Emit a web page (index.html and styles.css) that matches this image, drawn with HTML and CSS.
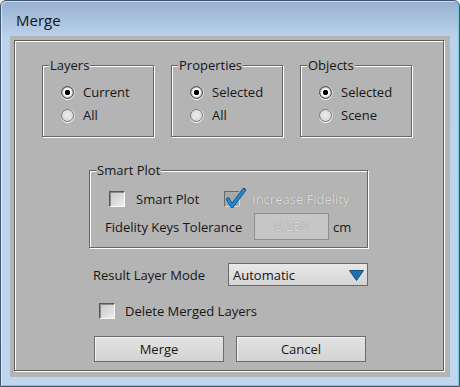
FILE: index.html
```html
<!DOCTYPE html>
<html>
<head>
<meta charset="utf-8">
<link rel="stylesheet" href="styles.css">
</head>
<body>
<div class="window">
  <div class="titlebar">Merge</div>
  <div class="client">
    <div class="panel">
      <div class="groups">
        <div class="group small">
          <div class="group-title">Layers</div>
          <div class="options">
            <div class="opt"><span class="radio checked"></span>Current</div>
            <div class="opt"><span class="radio"></span>All</div>
          </div>
        </div>
        <div class="group small">
          <div class="group-title">Properties</div>
          <div class="options">
            <div class="opt"><span class="radio checked"></span>Selected</div>
            <div class="opt"><span class="radio"></span>All</div>
          </div>
        </div>
        <div class="group small">
          <div class="group-title">Objects</div>
          <div class="options">
            <div class="opt"><span class="radio checked"></span>Selected</div>
            <div class="opt"><span class="radio"></span>Scene</div>
          </div>
        </div>
      </div>

      <div class="group smart">
        <div class="group-title">Smart Plot</div>
        <div class="smart-body">
          <div class="check-row">
            <div class="check-opt first"><span class="cb"></span>Smart Plot</div>
            <div class="check-opt">
              <svg class="cb-checked" width="16" height="16" viewBox="0 0 16 16">
                <rect x="0.5" y="0.5" width="15" height="15" fill="#a9a9a9" stroke="#6a6a6a"/>
                <path d="M15.5 0.5 V15.5 H0.5" fill="none" stroke="#d8d8d8"/>
                <path d="M4 8.5 L8 15 L20 -1" fill="none" stroke="#0f5a94" stroke-width="4.2" stroke-linecap="round" stroke-linejoin="round"/>
                <path d="M4 8.5 L8 15 L20 -1" fill="none" stroke="#2a86cc" stroke-width="2.6" stroke-linecap="round" stroke-linejoin="round"/>
              </svg>
              <span class="disabled">Increase Fidelity</span>
            </div>
          </div>
          <div class="tol-row">
            <span class="tol-label">Fidelity Keys Tolerance</span>
            <span class="input">0.250</span>
            <span class="unit">cm</span>
          </div>
        </div>
      </div>

      <div class="mode-row">
        <span class="mode-label">Result Layer Mode</span>
        <div class="select">
          <span>Automatic</span>
          <svg width="15" height="11" viewBox="0 0 15 11"><polygon points="0.5,0.5 14.5,0.5 7.5,10.5" fill="#1f72ad" stroke="#124f7d"/></svg>
        </div>
      </div>

      <div class="delete-row">
        <span class="cb"></span>Delete Merged Layers
      </div>

      <div class="buttons">
        <div class="btn">Merge</div>
        <div class="btn">Cancel</div>
      </div>
    </div>
  </div>
</div>
</body>
</html>
```

FILE: styles.css
```css
* { box-sizing: border-box; }
html, body { margin: 0; padding: 0; }
body {
  width: 460px;
  height: 387px;
  overflow: hidden;
  background: #fff;
  font-family: "Open Sans", "Noto Sans", sans-serif;
  font-size: 13px;
  color: #161616;
}
.window {
  width: 460px;
  height: 387px;
  border: 1px solid #40556e;
  border-radius: 6px 6px 0 0;
  background: linear-gradient(to bottom, #97b0ce 0, #a8c1de 18px, #bad2ea 36px, #bed6ee 100%);
  padding: 0 9px 9px;
  box-shadow: inset 1px 1px 0 rgba(255,255,255,0.55), inset -1px -1px 0 #79c6da;
  display: flex;
  flex-direction: column;
}
.titlebar {
  height: 35px;
  padding: 4px 0 0 6px;
  font-size: 15px;
  line-height: 30px;
  color: #151515;
}
.client {
  flex: 1;
  background: #b4b4b4;
  padding: 4px;
}
.panel {
  width: 430px;
  height: 331px;
  border: 1px solid #5e5e5e;
  box-shadow: inset 1px 1px 0 #fff, 1px 1px 0 #fff;
}
.groups {
  display: flex;
  gap: 17px;
  padding: 24px 0 0 27px;
}
.group {
  border: 1px solid #666;
  box-shadow: inset 1px 1px 0 #fff, 1px 1px 0 #fff;
}
.group.small {
  width: 112px;
  height: 72px;
}
.group-title {
  width: fit-content;
  margin: -9px 0 0 6px;
  padding: 0 1px;
  background: #b4b4b4;
  line-height: 16px;
}
.options {
  display: flex;
  flex-direction: column;
  gap: 1px;
  padding: 8px 0 0 18px;
}
.opt {
  display: flex;
  align-items: center;
  height: 22px;
}
.radio {
  flex: none;
  width: 13px;
  height: 13px;
  margin-right: 9px;
  border-radius: 50%;
  border: 1px solid #7a7a7a;
  background: radial-gradient(circle at 50% 45%, #eeeeee 0, #dcdcdc 60%, #c8c8c8 100%);
  box-shadow: 0 1px 0 #fff, 1px 0 0 rgba(255,255,255,0.6);
}
.radio.checked {
  border-color: #4e4e4e;
  background: radial-gradient(circle at 50% 50%, #000 0, #000 2.3px, #fff 3px, #fff 3.8px, #bdbdbd 5px, #8a8a8a 6.5px);
}
.group.smart {
  width: 279px;
  height: 78px;
  margin: 33px 0 0 74px;
}
.smart-body {
  padding-top: 10px;
}
.check-row {
  display: flex;
  align-items: center;
  height: 22px;
  padding-left: 19px;
}
.check-opt {
  display: flex;
  align-items: center;
}
.check-opt.first {
  width: 115px;
}
.cb {
  flex: none;
  width: 16px;
  height: 16px;
  margin-right: 11px;
  border: 1px solid;
  border-color: #555 #fafafa #fafafa #555;
  box-shadow: inset 1px 1px 0 #8c8c8c;
  background: linear-gradient(135deg, #c6c6c6, #eeeeee);
}
.cb-checked {
  flex: none;
  overflow: visible;
  margin-right: 12px;
}
.disabled {
  color: #dcdcdc;
  text-shadow: 0 0 1px #7e7e7e;
}
.tol-row {
  display: flex;
  align-items: center;
  height: 27px;
  margin-top: 3px;
  padding-left: 15px;
}
.tol-label {
  width: 149px;
}
.input {
  width: 75px;
  height: 27px;
  line-height: 25px;
  text-align: center;
  border: 1px solid #8e8e8e;
  background: #c6c6c6;
  color: #dedede;
  text-shadow: 0 0 1px #6f6f6f;
}
.unit {
  margin-left: 4px;
}
.mode-row {
  display: flex;
  align-items: center;
  height: 23px;
  margin: 15px 0 0 78px;
}
.mode-label {
  width: 135px;
}
.select {
  width: 140px;
  height: 23px;
  display: flex;
  align-items: center;
  justify-content: space-between;
  padding: 0 3px 0 4px;
  border: 1px solid #6a6a6a;
  background: linear-gradient(#e8e8e8, #d4d4d4);
}
.select svg {
  margin-top: 1px;
}
.delete-row {
  display: flex;
  align-items: center;
  height: 22px;
  margin-top: 14px;
  padding-left: 84px;
}
.delete-row .cb {
  margin-right: 10px;
}
.buttons {
  display: flex;
  gap: 12px;
  margin-top: 14px;
  padding-left: 79px;
}
.btn {
  width: 130px;
  height: 26px;
  line-height: 24px;
  text-align: center;
  border: 1px solid #6c6c6c;
  background: linear-gradient(#e2e2e2, #d4d4d4);
  box-shadow: inset 1px 1px 0 #f2f2f2;
}
```
